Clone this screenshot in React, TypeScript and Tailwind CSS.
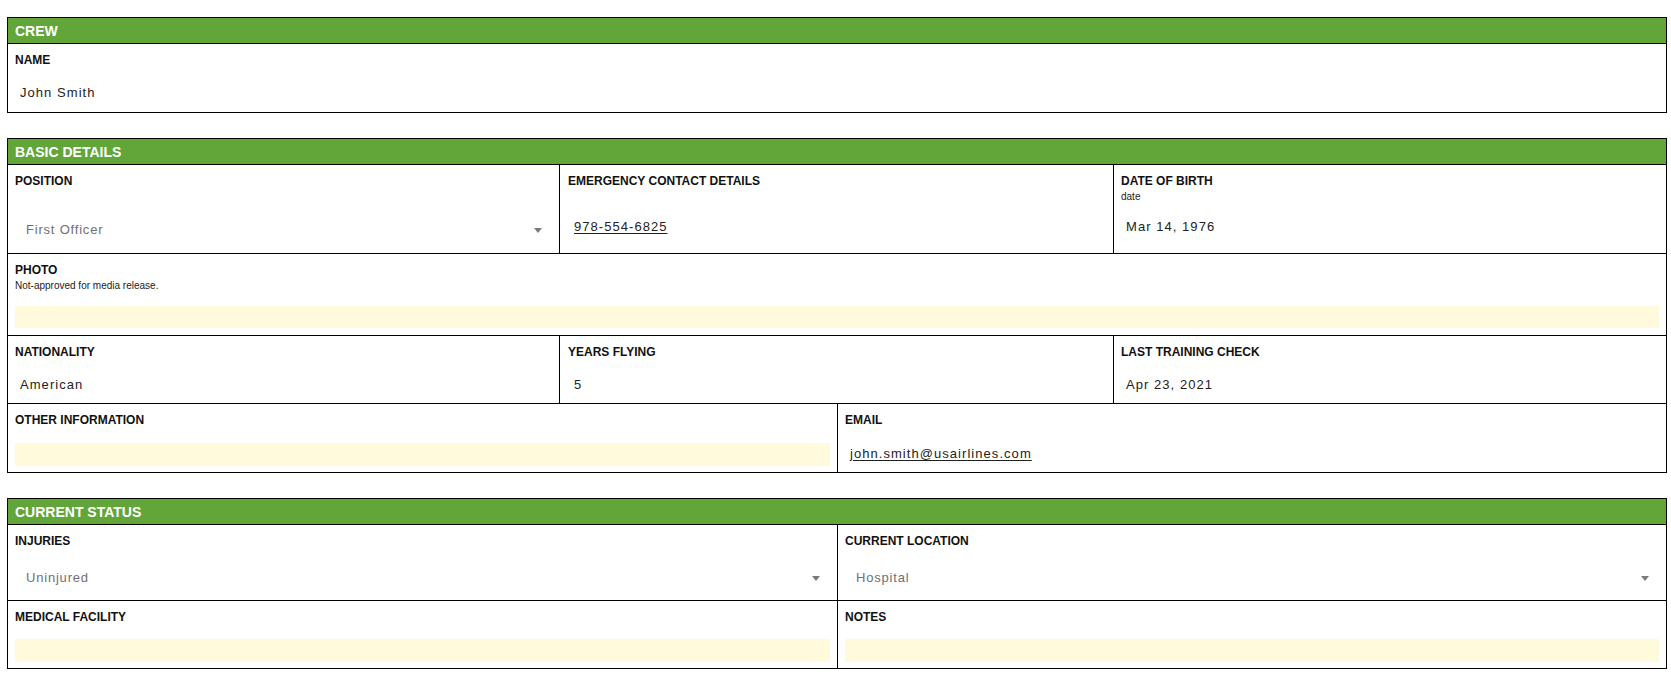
import * as React from "react";

function Section({ title, children }: { title: string; children: React.ReactNode }) {
  return (
    <section className="border border-black bg-white">
      <div className="flex h-[26px] items-center border-b border-black bg-[#62a539] px-[7px] pt-[1px] text-[14px] font-bold text-white">
        {title}
      </div>
      {children}
    </section>
  );
}

function Label({ children }: { children: React.ReactNode }) {
  return <div className="text-[12px] font-bold leading-[15px] text-[#111]">{children}</div>;
}

function Note({ children }: { children?: React.ReactNode }) {
  return <div className="mt-[2px] h-[12px] text-[10px] leading-[12px] text-[#222]">{children}</div>;
}

function Value({ children, link, className = "" }: { children: React.ReactNode; link?: boolean; className?: string }) {
  return (
    <div className={`px-[5px] text-[13px] leading-[20px] tracking-[1.05px] text-[#222] ${className}`}>
      <span className={link ? "underline underline-offset-2" : ""}>{children}</span>
    </div>
  );
}

function Caret() {
  return (
    <svg width="8" height="5" viewBox="0 0 8 5">
      <path d="M0 0h8L4 5z" fill="#7a7a7a" />
    </svg>
  );
}

function Select({ value, className = "" }: { value: string; className?: string }) {
  return (
    <div className={`flex h-[30px] items-center justify-between pl-[11px] pr-[10px] text-[13px] tracking-[0.8px] text-[#707070] ${className}`}>
      <span>{value}</span>
      <Caret />
    </div>
  );
}

function Blank({ className = "" }: { className?: string }) {
  return <div className={`bg-[#fffadc] ${className}`} />;
}

export default function App() {
  return (
    <div
      className="flex min-h-[677px] flex-col gap-[25px] bg-white pl-[7px] pr-[4px] pt-[17px]"
      style={{ fontFamily: '"Liberation Sans", Arial, sans-serif' }}
    >
      <Section title="CREW">
        <div className="h-[68px] px-[7px] pt-[9px]">
          <Label>NAME</Label>
          <Value className="mt-[15px]">John Smith</Value>
        </div>
      </Section>

      <Section title="BASIC DETAILS">
        <div className="grid h-[89px] grid-cols-[551px_554px_1fr] border-b border-black">
          <div className="px-[7px] pt-[9px]">
            <Label>POSITION</Label>
            <Note />
            <Select value="First Officer" className="mt-[12px]" />
          </div>
          <div className="border-l border-black pl-[8px] pr-[7px] pt-[9px]">
            <Label>EMERGENCY CONTACT DETAILS</Label>
            <Note />
            <Value link className="mt-[14px] pl-[6px]">978-554-6825</Value>
          </div>
          <div className="border-l border-black px-[7px] pt-[9px]">
            <Label>DATE OF BIRTH</Label>
            <Note>date</Note>
            <Value className="mt-[14px]">Mar 14, 1976</Value>
          </div>
        </div>

        <div className="h-[82px] border-b border-black px-[7px] pt-[9px]">
          <Label>PHOTO</Label>
          <Note>Not-approved for media release.</Note>
          <Blank className="mt-[14px] h-[22px]" />
        </div>

        <div className="grid h-[68px] grid-cols-[551px_554px_1fr] border-b border-black">
          <div className="px-[7px] pt-[9px]">
            <Label>NATIONALITY</Label>
            <Value className="mt-[15px]">American</Value>
          </div>
          <div className="border-l border-black pl-[8px] pr-[7px] pt-[9px]">
            <Label>YEARS FLYING</Label>
            <Value className="mt-[15px] pl-[6px]">5</Value>
          </div>
          <div className="border-l border-black px-[7px] pt-[9px]">
            <Label>LAST TRAINING CHECK</Label>
            <Value className="mt-[15px]">Apr 23, 2021</Value>
          </div>
        </div>

        <div className="grid h-[68px] grid-cols-2">
          <div className="px-[7px] pt-[9px]">
            <Label>OTHER INFORMATION</Label>
            <Blank className="mt-[15px] h-[23px]" />
          </div>
          <div className="border-l border-black px-[7px] pt-[9px]">
            <Label>EMAIL</Label>
            <Value link className="mt-[16px]">john.smith@usairlines.com</Value>
          </div>
        </div>
      </Section>

      <Section title="CURRENT STATUS">
        <div className="grid h-[76px] grid-cols-2 border-b border-black">
          <div className="px-[7px] pt-[9px]">
            <Label>INJURIES</Label>
            <Select value="Uninjured" className="mt-[14px]" />
          </div>
          <div className="border-l border-black px-[7px] pt-[9px]">
            <Label>CURRENT LOCATION</Label>
            <Select value="Hospital" className="mt-[14px]" />
          </div>
        </div>
        <div className="grid h-[67px] grid-cols-2">
          <div className="px-[7px] pt-[9px]">
            <Label>MEDICAL FACILITY</Label>
            <Blank className="mt-[14px] h-[23px]" />
          </div>
          <div className="border-l border-black px-[7px] pt-[9px]">
            <Label>NOTES</Label>
            <Blank className="mt-[14px] h-[23px]" />
          </div>
        </div>
      </Section>
    </div>
  );
}
